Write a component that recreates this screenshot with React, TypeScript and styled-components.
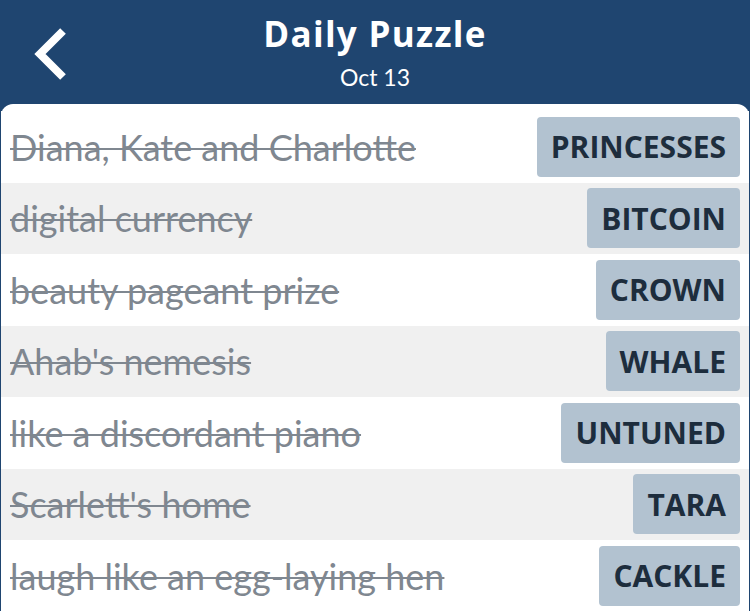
import React from "react";
import styled, { createGlobalStyle } from "styled-components";

const GlobalStyle = createGlobalStyle`
  html, body {
    margin: 0;
    padding: 0;
    background: #ffffff;
  }
  body {
    font-family: Lato, "Open Sans", sans-serif;
  }
`;

const Page = styled.div`
  width: 750px;
  height: 611px;
  overflow: hidden;
  background: #1f4570;
  display: flex;
  flex-direction: column;
`;

const Header = styled.header`
  height: 104px;
  flex-shrink: 0;
  position: relative;
  display: flex;
  flex-direction: column;
  align-items: center;
  color: #ffffff;
`;

const Title = styled.h1`
  margin: 12px 0 0;
  font-family: "Open Sans", Lato, sans-serif;
  font-size: 35px;
  font-weight: 700;
  line-height: 44px;
  letter-spacing: 1.3px;
`;

const Subtitle = styled.div`
  margin-top: 8px;
  font-size: 23px;
  line-height: 26px;
`;

const BackButton = styled.button`
  position: absolute;
  left: 30px;
  top: 24px;
  width: 40px;
  height: 60px;
  padding: 0;
  border: none;
  background: transparent;
  cursor: pointer;
`;

const Panel = styled.div`
  flex: 1;
  background: #ffffff;
  border-radius: 12px 12px 0 0;
  padding-top: 7px;
  margin: 0 1px;
`;

const Row = styled.div<{ $shaded: boolean }>`
  height: 71.5px;
  display: flex;
  align-items: center;
  justify-content: space-between;
  padding: 0 9px;
  background: ${(p) => (p.$shaded ? "#f0f0f0" : "#ffffff")};
`;

const Clue = styled.span`
  font-size: 36px;
  color: #7f8790;
  white-space: nowrap;
  text-decoration: line-through;
  text-decoration-thickness: 2px;
`;

const Answer = styled.span`
  height: 60px;
  display: flex;
  align-items: center;
  padding: 0 14px;
  border-radius: 4px;
  background: #b2c2d0;
  color: #1d2d3d;
  font-family: "Open Sans", Lato, sans-serif;
  font-size: 30px;
  font-weight: 700;
`;

const rows = [
  ["Diana, Kate and Charlotte", "PRINCESSES"],
  ["digital currency", "BITCOIN"],
  ["beauty pageant prize", "CROWN"],
  ["Ahab's nemesis", "WHALE"],
  ["like a discordant piano", "UNTUNED"],
  ["Scarlett's home", "TARA"],
  ["laugh like an egg-laying hen", "CACKLE"],
];

export default function App() {
  return (
    <>
      <GlobalStyle />
      <Page>
        <Header>
          <BackButton aria-label="Back">
            <svg width="40" height="60" viewBox="0 0 40 60">
              <path
                d="M33 7 L10 30 L33 53"
                fill="none"
                stroke="#ffffff"
                strokeWidth="8"
                strokeLinecap="butt"
                strokeLinejoin="miter"
              />
            </svg>
          </BackButton>
          <Title>Daily Puzzle</Title>
          <Subtitle>Oct 13</Subtitle>
        </Header>
        <Panel>
          {rows.map(([clue, answer], i) => (
            <Row key={answer} $shaded={i % 2 === 1}>
              <Clue>{clue}</Clue>
              <Answer>{answer}</Answer>
            </Row>
          ))}
        </Panel>
      </Page>
    </>
  );
}
